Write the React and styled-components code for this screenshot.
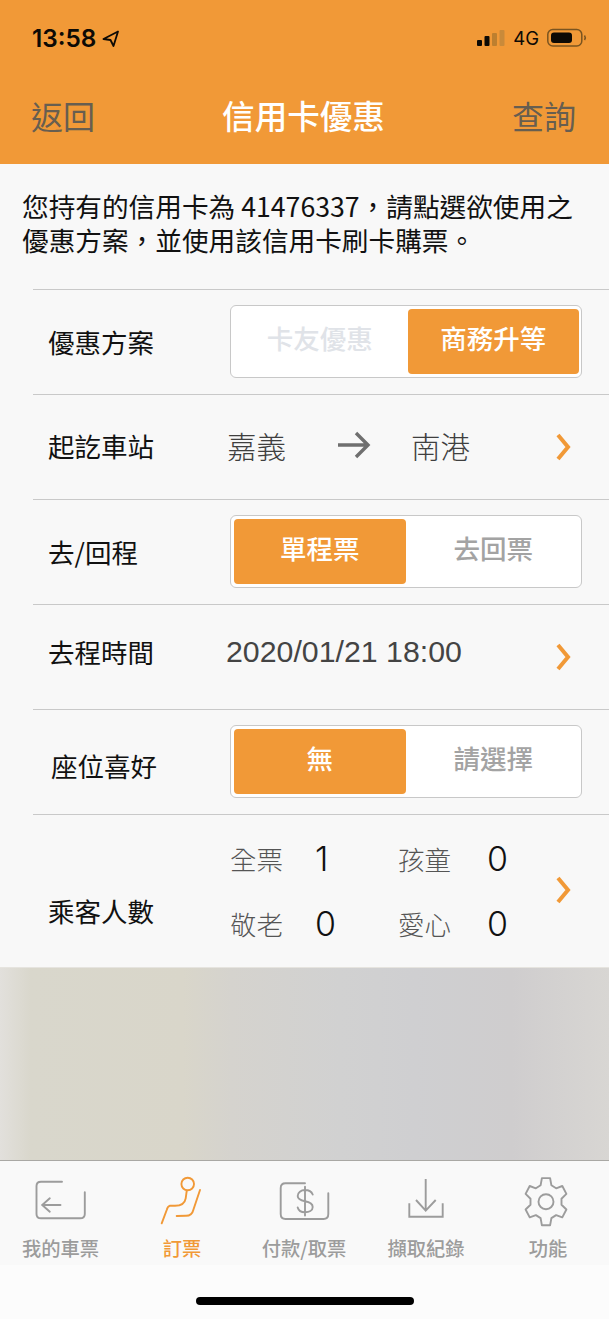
import React from 'react';
import styled, { createGlobalStyle } from 'styled-components';

const orange = '#f19937';
const tabGray = '#9c9c9c';

const Global = createGlobalStyle`
  html, body { margin: 0; padding: 0; background: #f8f8f8; }
  body { font-family: "Noto Sans CJK TC", "Liberation Sans", sans-serif; }
`;

const Page = styled.div`
  width: 609px;
  height: 1319px;
  display: flex;
  flex-direction: column;
  overflow: hidden;
  background: #f8f8f8;
`;

const Header = styled.header`
  height: 164px;
  flex: none;
  background: ${orange};
  display: flex;
  flex-direction: column;
`;

const StatusBar = styled.div`
  height: 76px;
  padding: 25px 22px 0 32px;
  box-sizing: border-box;
  display: flex;
  justify-content: space-between;
  align-items: flex-start;
  color: #0d0a05;
`;

const Clock = styled.div`
  font-family: Inter, "Liberation Sans", sans-serif;
  font-size: 24.3px;
  line-height: 26px;
  font-weight: 600;
  display: flex;
  align-items: center;
  gap: 6px;
`;

const StatusRight = styled.div`
  display: flex;
  align-items: center;
  gap: 8px;
  height: 26px;
  font-family: Inter, "Liberation Sans", sans-serif;
  font-size: 18.5px;
`;

const NavBar = styled.div`
  flex: 1;
  padding: 0 33px 10px 31px;
  display: flex;
  justify-content: space-between;
  align-items: center;
  font-size: 32px;
  line-height: 40px;
`;

const NavLink = styled.span`
  color: #675e50;
  font-weight: 400;
`;

const NavTitle = styled.span`
  color: #fff;
  font-weight: 500;
  font-size: 32.6px;
`;

const Intro = styled.p`
  margin: 0;
  height: 125px;
  flex: none;
  box-sizing: border-box;
  padding: 25px 20px 0 22px;
  font-size: 26.67px;
  line-height: 34px;
  color: #111;
`;

const Form = styled.section`
  flex: none;
  padding-left: 33px;
`;

const Row = styled.div`
  height: ${p => p.$h || 105}px;
  box-sizing: border-box;
  border-top: 1px solid #c9c9c9;
  display: flex;
  align-items: center;
  padding-left: 15px;
  position: relative;
`;

const Label = styled.div`
  width: 182px;
  flex: none;
  font-size: 26.5px;
  line-height: 36px;
  color: #111;
  position: relative;
  top: ${p => p.$dy || 0}px;
  left: ${p => p.$dx || 0}px;
`;

const Toggle = styled.div`
  width: 352px;
  height: 73px;
  box-sizing: border-box;
  border: 1px solid #c8c8c8;
  border-radius: 6px;
  background: #fff;
  padding: 3px 2px 3px 3px;
  display: flex;
  gap: 2px;
  position: relative;
  top: -1px;
`;

const Option = styled.div`
  flex: 1;
  border-radius: 4px;
  display: flex;
  align-items: center;
  justify-content: center;
  padding-bottom: 8px;
  box-sizing: border-box;
  font-size: 26.5px;
  font-weight: 500;
  background: ${p => p.$on ? orange : 'transparent'};
  color: ${p => p.$on ? '#fff' : p.$dim ? '#e0e3e8' : '#a3a3a3'};
`;

const Value = styled.div`
  flex: 1;
  display: flex;
  align-items: center;
  font-size: 29.5px;
  line-height: 40px;
  color: #3f3f3f;
  font-weight: 300;
  margin-left: -3px;
  padding-bottom: 4px;
`;

const StationFrom = styled.span`
  width: 110px;
`;

const StationTo = styled.span`
  margin-left: 40px;
`;

const ArrowIcon = styled.svg`
  flex: none;
`;

const DateText = styled.span`
  font-family: "Liberation Sans", sans-serif;
  font-size: 30.3px;
  color: #444;
  position: relative;
  top: -3px;
  margin-left: -1px;
`;

const Chevron = styled.svg`
  position: absolute;
  right: 36px;
  top: ${p => p.$top}px;
`;

const Passengers = styled.div`
  display: grid;
  grid-template-columns: 85px 83px 89px 40px;
  grid-auto-rows: 65px;
  align-items: center;
`;

const PaxName = styled.span`
  font-size: 26.5px;
  font-weight: 300;
  color: #555;
`;

const PaxNum = styled.span`
  font-family: Inter, "Liberation Sans", sans-serif;
  font-size: 34px;
  font-weight: 300;
  color: #111;
  line-height: 40px;
`;

const Backdrop = styled.div`
  height: 193px;
  flex: none;
  box-sizing: border-box;
  border-top: 1px solid #e6e4df;
  background: linear-gradient(90deg, #e2e0dc 0%, #d9d7cc 5%, #d9d6ca 30%, #d5d3ce 38%, #d1d1d1 56%, #cfcfd1 68%, #cfcdce 84%, #d8d6d3 100%);
`;

const TabBar = styled.nav`
  flex: 1;
  background: #fcfcfc;
  border-top: 1px solid #a9a8a4;
  display: flex;
  flex-direction: column;
`;

const Tabs = styled.div`
  display: grid;
  grid-template-columns: 121px 122px 122px 122px 122px;
  background: #f9f9f9;
  padding-bottom: 4px;
`;

const Tab = styled.div`
  display: flex;
  flex-direction: column;
  align-items: center;
  color: ${p => p.$on ? orange : tabGray};
  font-size: 19.3px;
  font-weight: 500;
  line-height: 26px;
  white-space: nowrap;
`;

const TabIcon = styled.svg`
  display: block;
  margin-top: 13px;
  margin-bottom: 5px;
`;

const HomeBar = styled.div`
  width: 218px;
  height: 8px;
  border-radius: 4px;
  background: #000;
  margin: 32px auto 0 196px;
`;

const chevron = (
  <path d="M5 3l10 12L5 27" fill="none" stroke={orange} strokeWidth="4" />
);

// six teeth, slightly taller than wide like the one in the app
const gearPath = () => {
  const pt = (deg, r) => {
    const a = (deg * Math.PI) / 180;
    return `${(28 + Math.cos(a) * r * 0.9).toFixed(1)} ${(27.7 + Math.sin(a) * r).toFixed(1)}`;
  };
  let d = '';
  for (let k = 0; k < 6; k++) {
    const a = 90 + k * 60;
    d += `${k ? 'L' : 'M'}${pt(a - 20, 17.5)}L${pt(a - 11, 24)}L${pt(a + 11, 24)}L${pt(a + 20, 17.5)}`;
  }
  return d + 'Z';
};

const tabIcons = {
  ticket: (
    <path d="M31 7.700H10Q5.500 7.700 5.500 12V40Q5.500 44.300 10 44.300H49Q53.800 44.300 53.800 40V18.300M29.500 31H11.200M18.800 24.300L11.200 31L18.800 37.700" />
  ),
  seat: (
    <>
      <circle cx="35.700" cy="10" r="6.300" />
      <path d="M34.700 17L33.700 24.300Q32.500 31.700 23 31.700H18Q15.500 32.500 14.700 36L9.700 49.300" />
      <path d="M48 16L41.300 36Q40 41.800 34 41.800L24.700 42" />
    </>
  ),
  pay: (
    <>
      <path d="M31 9.300H11.500Q6.700 9.300 6.700 14V40Q6.700 45 11.500 45H49.500Q54.300 45 54.300 40V19.300" />
      <path d="M38.700 20.500C37.500 17.500 34.500 16 31 16C27 16 23.700 18.500 23.700 22C23.700 25.500 27 26.500 31 27.300C35 28 38.700 29.500 38.700 33C38.700 36.500 35 38.300 31 38.300C27 38.300 24.500 36.500 23.700 33.500M31 12.700V41.500" />
    </>
  ),
  download: (
    <path d="M29.700 5V36.500M20 26L29.700 36.700L39.700 26M13.300 29.300V42.700H46.700V29.300" strokeLinecap="butt" />
  ),
  gear: (
    <>
      <circle cx="28" cy="27.700" r="7.500" />
      <path d={gearPath()} strokeLinejoin="round" />
    </>
  ),
};

const TabItem = ({ icon, label, on }) => (
  <Tab $on={on}>
    <TabIcon
      width="60"
      height="56"
      viewBox="0 0 60 56"
      fill="none"
      stroke={on ? orange : tabGray}
      strokeWidth="1.900"
      strokeLinecap="round"
    >
      {tabIcons[icon]}
    </TabIcon>
    {label}
  </Tab>
);

export default function App() {
  return (
    <Page>
      <Global />
      <Header>
        <StatusBar>
          <Clock>
            13:58
            <svg width="17" height="17" viewBox="0 0 17 17">
              <path d="M16 1.500L1.500 9L8.500 10L11.500 16Z" fill="none" stroke="#0d0a05" strokeWidth="1.800" strokeLinejoin="round" />
            </svg>
          </Clock>
          <StatusRight>
            <svg width="28" height="18" viewBox="0 0 28 18">
              <rect x="0" y="11" width="5" height="6" rx="1" fill="#0d0a05" />
              <rect x="7.500" y="7" width="5" height="10" rx="1" fill="#0d0a05" />
              <rect x="15" y="4" width="5" height="13" rx="1" fill="#bd7f2f" />
              <rect x="22.500" y="1" width="5" height="16" rx="1" fill="#c98a3a" />
            </svg>
            4G
            <svg width="40" height="20" viewBox="0 0 40 20">
              <rect x="0.800" y="1.500" width="34" height="16.500" rx="5" fill="none" stroke="#7a5420" strokeWidth="1.500" />
              <rect x="4" y="4.500" width="21" height="10.500" rx="3" fill="#0d0a05" />
              <path d="M37.500 7.500q1.500 2.200 0 4.500" fill="none" stroke="#7a5420" strokeWidth="1.500" />
            </svg>
          </StatusRight>
        </StatusBar>
        <NavBar>
          <NavLink>返回</NavLink>
          <NavTitle>信用卡優惠</NavTitle>
          <NavLink>查詢</NavLink>
        </NavBar>
      </Header>

      <Intro>您持有的信用卡為 41476337，請點選欲使用之優惠方案，並使用該信用卡刷卡購票。</Intro>

      <Form>
        <Row>
          <Label>優惠方案</Label>
          <Toggle>
            <Option $dim>卡友優惠</Option>
            <Option $on>商務升等</Option>
          </Toggle>
        </Row>
        <Row>
          <Label $dy={-1}>起訖車站</Label>
          <Value>
            <StationFrom>嘉義</StationFrom>
            <ArrowIcon width="34" height="28" viewBox="0 0 34 28">
              <path d="M1 14h30M19 2l12 12-12 12" fill="none" stroke="#6f6f6f" strokeWidth="3.400" />
            </ArrowIcon>
            <StationTo>南港</StationTo>
          </Value>
          <Chevron $top={37} width="20" height="30" viewBox="0 0 20 30">{chevron}</Chevron>
        </Row>
        <Row>
          <Label>去/回程</Label>
          <Toggle>
            <Option $on>單程票</Option>
            <Option>去回票</Option>
          </Toggle>
        </Row>
        <Row>
          <Label $dy={-5}>去程時間</Label>
          <Value><DateText>2020/01/21 18:00</DateText></Value>
          <Chevron $top={37} width="20" height="30" viewBox="0 0 20 30">{chevron}</Chevron>
        </Row>
        <Row>
          <Label $dx={3} $dy={4}>座位喜好</Label>
          <Toggle>
            <Option $on>無</Option>
            <Option>請選擇</Option>
          </Toggle>
        </Row>
        <Row $h={153}>
          <Label $dy={20}>乘客人數</Label>
          <Passengers>
            <PaxName>全票</PaxName><PaxNum>1</PaxNum>
            <PaxName>孩童</PaxName><PaxNum>0</PaxNum>
            <PaxName>敬老</PaxName><PaxNum>0</PaxNum>
            <PaxName>愛心</PaxName><PaxNum>0</PaxNum>
          </Passengers>
          <Chevron $top={60} width="20" height="30" viewBox="0 0 20 30">{chevron}</Chevron>
        </Row>
      </Form>

      <Backdrop />

      <TabBar>
        <Tabs>
          <TabItem icon="ticket" label="我的車票" />
          <TabItem icon="seat" label="訂票" on />
          <TabItem icon="pay" label="付款/取票" />
          <TabItem icon="download" label="擷取紀錄" />
          <TabItem icon="gear" label="功能" />
        </Tabs>
        <HomeBar />
      </TabBar>
    </Page>
  );
}
